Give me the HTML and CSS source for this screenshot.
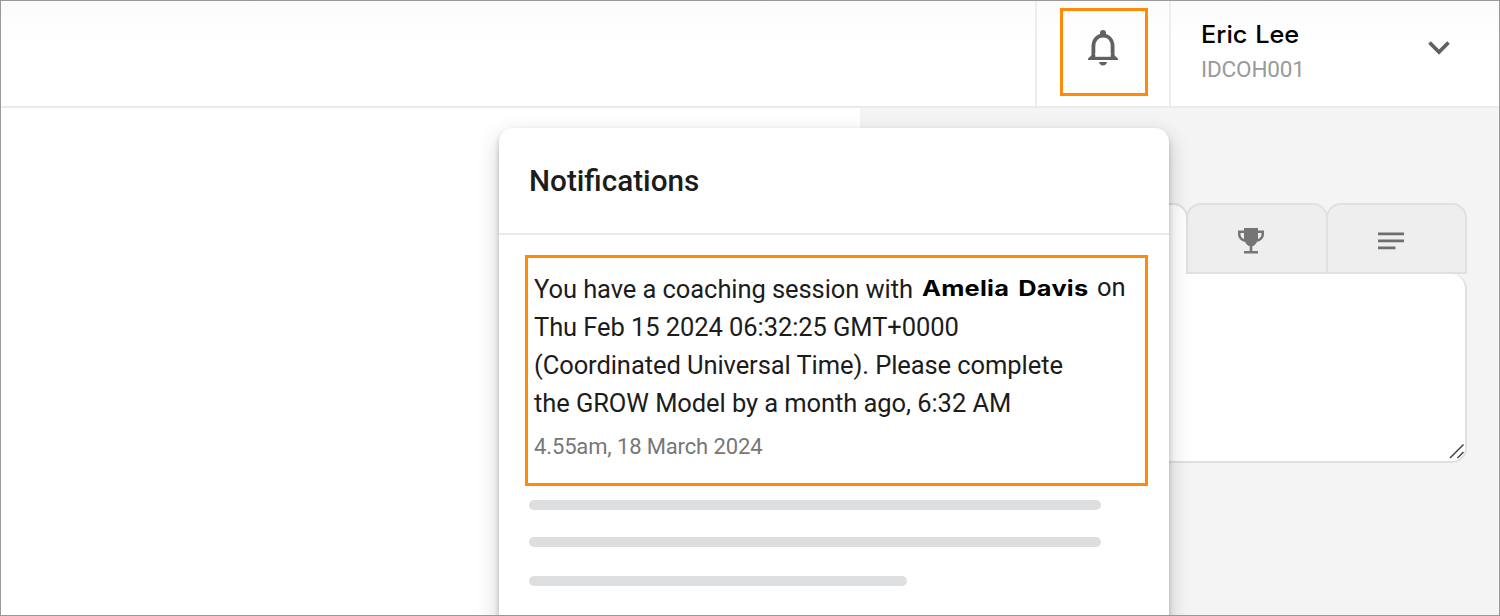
FILE: index.html
```html
<!DOCTYPE html>
<html lang="en">
<head>
<meta charset="utf-8">
<title>Notifications</title>
<link rel="stylesheet" href="styles.css">
</head>
<body>
<div class="frame">
  <header class="topbar">
    <div class="bell-cell">
      <button class="bell" aria-label="Notifications">
        <svg width="30" height="38" viewBox="0 0 30 38"><path fill="none" stroke="#616161" stroke-width="3.800" d="M5.400 29V17.500C5.400 10.500 9.600 6.700 15 6.700S24.600 10.500 24.600 17.500V29"/><path fill="#616161" d="M12 7V4a3 3 0 0 1 6 0V7zM0 31v-1.500l4-3.500h22l4 3.500V31z"/><path fill="#fff" d="M7.300 24h15.400v3.800H7.300z"/><path fill="#616161" d="M11 33h8c-.4 2.200-2 3.600-4 3.600s-3.600-1.400-4-3.600z"/></svg>
      </button>
    </div>
    <div class="user">
      <div class="who">
        <div class="name"><span class="name-text">Eric Lee</span></div>
        <div class="id">IDCOH001</div>
      </div>
      <svg class="chevron" width="22" height="14" viewBox="0 0 22 14"><path fill="none" stroke="#616161" stroke-width="3.800" d="M1.500 1.500 11 11l9.500-9.500"/></svg>
    </div>
  </header>
  <main class="content">
    <section class="pane"></section>
    <section class="side">
      <div class="tabs">
        <div class="tab active"></div>
        <div class="tab"><svg width="26" height="26" viewBox="0 0 26 26"><path fill="#757575" d="M6 0h14v2.500h6V6c0 4-2.600 7-7 7.800-1.100 2.400-2.900 4-4.700 4.500V23H20v2.600H6V23h5.700v-4.700C9.900 17.800 8.100 16.200 7 13.800 2.600 13 0 10 0 6V2.500h6z"/><path fill="#eee" d="M2.500 4.900H6V11C3.700 10.200 2.500 8.300 2.500 6zM23.500 4.900H20V11c2.300-.8 3.500-2.700 3.500-5z"/></svg></div>
        <div class="tab"><svg width="26" height="18" viewBox="0 0 26 18"><path fill="#6e6e6e" d="M0 .5h26v2.700H0zM0 7.500h26v2.700H0zM0 14.600h17.500v2.700H0z"/></svg></div>
      </div>
      <div class="notes">
        <svg width="16" height="16" viewBox="0 0 16 16"><path fill="none" stroke="#444" stroke-width="1.500" d="M1 15 14.500 1.500M8.500 15l6-6"/></svg>
      </div>
    </section>
  </main>
  <aside class="popover">
    <h1 class="title">Notifications</h1>
    <div class="list">
      <article class="item">
        <p class="line first"><span class="lead">You have a coaching session with</span><b class="coachee"><span class="coachee-name">Amelia Davis</span></b><span class="on">on</span></p>
        <p class="line">Thu Feb 15 2024 06:32:25 GMT+0000</p>
        <p class="line">(Coordinated Universal Time). Please complete</p>
        <p class="line">the GROW Model by a month ago, 6:32 AM</p>
        <p class="time">4.55am, 18 March 2024</p>
      </article>
      <div class="bars"><i class="bar"></i><i class="bar"></i><i class="bar short"></i></div>
    </div>
  </aside>
</div>
</body>
</html>
```
FILE: styles.css
```css
* { box-sizing: border-box; }
body { margin: 0; font-family: Roboto, "Liberation Sans", sans-serif; background: #fff; }
.frame { position: relative; width: 1500px; height: 616px; border: 1px solid #999; overflow: hidden; display: flex; flex-direction: column; }
.topbar { flex: none; height: 107px; border-bottom: 2px solid #ebebeb; display: flex; justify-content: flex-end; background: linear-gradient(#fbfbfb, #fff 40px); }
.bell-cell { width: 134px; border-left: 2px solid #ededed; padding: 7px 0 0 23px; }
.bell { width: 88px; height: 88px; border: 3px solid #ff8a05; background: transparent; padding: 0 2px 9px 0; display: flex; align-items: center; justify-content: center; }
.bell svg { display: block; }
.user { width: 330px; border-left: 2px solid #ededed; display: flex; justify-content: space-between; padding: 18px 49px 0 30px; }
.name { height: 32px; font: 500 24px/32px Inter, sans-serif; color: #000; white-space: nowrap; }
.name-text { display: inline-block; word-spacing: 1px; transform: scaleX(1.055); transform-origin: left; }
.id { margin-top: 4px; font-size: 22.500px; line-height: 28px; letter-spacing: -.150px; color: #9a9a9a; white-space: nowrap; }
.chevron { margin-top: 22px; }
.content { flex: 1; display: flex; }
.pane { width: 859px; background: #fff; }
.side { flex: 1; background: #f4f4f4; padding: 95px 32px 0 0; }
.tabs { display: flex; height: 71px; }
.tab { flex: none; width: 142px; margin-right: -2px; border: 2px solid #e0e0e0; border-radius: 15px 15px 0 0; background: #eee; display: flex; align-items: center; justify-content: center; padding-top: 5px; padding-right: 12px; }
.tab.active { width: 328px; background: #fff; border-bottom-color: #fff; }
.tab:last-child { width: 141px; margin-right: 0; }
.notes { height: 189px; background: #fff; border: 2px solid #e0e0e0; border-top: 0; border-radius: 0 15px 15px 0; display: flex; align-items: flex-end; justify-content: flex-end; padding: 0 0 2px; }
.popover { position: absolute; left: 498px; top: 127px; width: 670px; height: 500px; background: #fff; border-radius: 14px 14px 0 0; box-shadow: 0 8px 22px rgba(0,0,0,.2), 0 3px 5px rgba(0,0,0,.2); }
.title { margin: 0; height: 107px; padding-left: 30px; border-bottom: 2px solid #ebebeb; font-size: 29.700px; line-height: 106px; font-weight: 500; color: #1c1c1c; }
.list { padding: 20px 21px 0 26px; }
.item { height: 231px; border: 3px solid #ff8a05; padding: 12px 0 0 6px; color: #1c1c1c; }
.line { margin: 0; height: 38px; font-size: 25.500px; line-height: 38px; letter-spacing: -.075px; white-space: nowrap; }
.first { display: flex; }
.lead { width: 388px; }
.coachee { width: 175px; font: 700 21.500px/36px Inter, sans-serif; letter-spacing: .2px; color: #000; }
.coachee-name { display: inline-block; word-spacing: 2.500px; transform: scaleX(1.18); transform-origin: left; }
.on { line-height: 35px; }
.time { margin: 8px 0 0; font-size: 22px; line-height: 34px; letter-spacing: -.130px; color: #777; }
.bars { padding: 14px 0 0 4px; display: grid; grid-template-rows: 37px 39px 10px; }
.bar { width: 572px; height: 10px; border-radius: 5px; background: #dddee0; }
.short { width: 378px; }
```
